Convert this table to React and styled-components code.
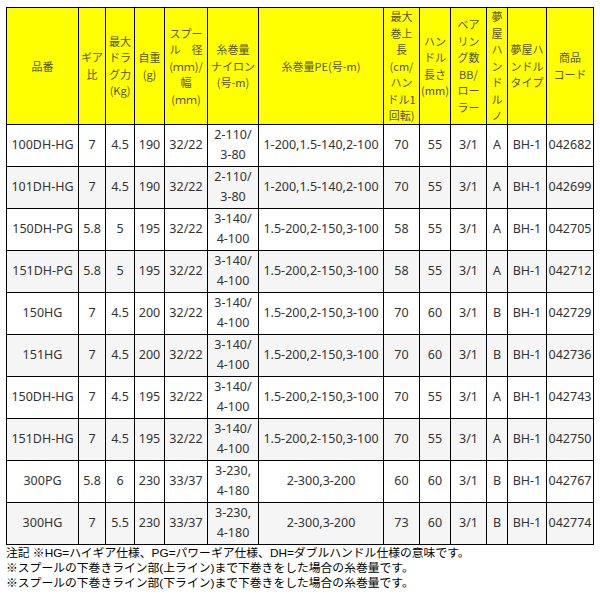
import React from "react";
import styled, { createGlobalStyle } from "styled-components";

const GlobalStyle = createGlobalStyle`
  html, body {
    margin: 0;
    padding: 0;
    background: #fff;
  }
  body {
    font-family: "Noto Sans", "Noto Sans CJK JP", sans-serif;
  }
`;

const StyledPage = styled.div`
  padding: 7px 0 0 6px;
`;

const StyledTable = styled.table`
  border-collapse: collapse;
  table-layout: fixed;
  width: 588px;
`;

const StyledCol = styled.col`
  width: ${(p) => p.$w}px;
`;

const StyledHeadRow = styled.tr`
  height: 116px;
  background: #ffff00;
`;

const StyledHeadCell = styled.th`
  border: 1px solid #000;
  padding: 0;
  font-family: "Noto Sans CJK JP", sans-serif;
  font-weight: normal;
  font-size: 11px;
  line-height: 16.5px;
  color: #55552e;
  text-align: center;
  vertical-align: middle;
`;

const StyledRow = styled.tr`
  height: 42px;
  background: ${(p) => (p.$alt ? "#f5f5f5" : "#fff")};
`;

const StyledCell = styled.td`
  border: 1px solid #000;
  padding: 0;
  font-family: "Noto Sans", "Noto Sans CJK JP", sans-serif;
  font-size: 12.5px;
  line-height: 20px;
  color: #333;
  text-align: center;
  vertical-align: middle;
  white-space: nowrap;
  overflow: hidden;
`;

const StyledNotes = styled.div`
  margin-top: 1px;
`;

const StyledNoteLine = styled.div`
  font-family: "Liberation Sans", "Noto Sans CJK JP", sans-serif;
  font-size: 11.8px;
  line-height: 15px;
  height: 15px;
  color: #000;
  white-space: nowrap;
`;

const colWidths = [72, 27, 29, 30, 43, 51, 125, 36, 31, 36, 21, 39, 47];

const headers = [
  ["品番"],
  ["ギア", "比"],
  ["最大", "ドラ", "グ力", "(Kg)"],
  ["自重", "(g)"],
  ["スプー", "ル　径", "(ｍｍ)/", "幅", "(ｍｍ)"],
  ["糸巻量", "ナイロン", "(号-m)"],
  ["糸巻量PE(号-m)"],
  ["最大", "巻上", "長", "(cm/", "ハン", "ドル1", "回転)"],
  ["ハン", "ドル", "長さ", "(mm)"],
  ["ベア", "リン", "グ数", "BB/", "ロー", "ラー"],
  ["夢", "屋", "ハ", "ン", "ド", "ル", "ノ"],
  ["夢屋ハ", "ンドル", "タイプ"],
  ["商品", "コード"],
];

const reels = [
  ["100DH-HG", "7", "4.5", "190", "32/22", "2-110/|3-80", "1-200,1.5-140,2-100", "70", "55", "3/1", "A", "BH-1", "042682"],
  ["101DH-HG", "7", "4.5", "190", "32/22", "2-110/|3-80", "1-200,1.5-140,2-100", "70", "55", "3/1", "A", "BH-1", "042699"],
  ["150DH-PG", "5.8", "5", "195", "32/22", "3-140/|4-100", "1.5-200,2-150,3-100", "58", "55", "3/1", "A", "BH-1", "042705"],
  ["151DH-PG", "5.8", "5", "195", "32/22", "3-140/|4-100", "1.5-200,2-150,3-100", "58", "55", "3/1", "A", "BH-1", "042712"],
  ["150HG", "7", "4.5", "200", "32/22", "3-140/|4-100", "1.5-200,2-150,3-100", "70", "60", "3/1", "B", "BH-1", "042729"],
  ["151HG", "7", "4.5", "200", "32/22", "3-140/|4-100", "1.5-200,2-150,3-100", "70", "60", "3/1", "B", "BH-1", "042736"],
  ["150DH-HG", "7", "4.5", "195", "32/22", "3-140/|4-100", "1.5-200,2-150,3-100", "70", "55", "3/1", "A", "BH-1", "042743"],
  ["151DH-HG", "7", "4.5", "195", "32/22", "3-140/|4-100", "1.5-200,2-150,3-100", "70", "55", "3/1", "A", "BH-1", "042750"],
  ["300PG", "5.8", "6", "230", "33/37", "3-230,|4-180", "2-300,3-200", "60", "60", "3/1", "B", "BH-1", "042767"],
  ["300HG", "7", "5.5", "230", "33/37", "3-230,|4-180", "2-300,3-200", "73", "60", "3/1", "B", "BH-1", "042774"],
];

const notes = [
  "注記 ※HG=ハイギア仕様、PG=パワーギア仕様、DH=ダブルハンドル仕様の意味です。",
  "※スプールの下巻きライン部(上ライン)まで下巻きをした場合の糸巻量です。",
  "※スプールの下巻きライン部(下ライン)まで下巻きをした場合の糸巻量です。",
];

const Lines = ({ parts }) =>
  parts.map((p, i) => (
    <React.Fragment key={i}>
      {i > 0 && <br />}
      {p}
    </React.Fragment>
  ));

const App = () => {
  return (
    <>
      <GlobalStyle />
      <StyledPage>
        <StyledTable>
          <colgroup>
            {colWidths.map((w, i) => (
              <StyledCol key={i} $w={w} />
            ))}
          </colgroup>
          <thead>
            <StyledHeadRow>
              {headers.map((h, i) => (
                <StyledHeadCell key={i}>
                  <Lines parts={h} />
                </StyledHeadCell>
              ))}
            </StyledHeadRow>
          </thead>
          <tbody>
            {reels.map((r, ri) => (
              <StyledRow key={ri} $alt={ri % 2 === 1}>
                {r.map((v, ci) => (
                  <StyledCell key={ci}>
                    <Lines parts={v.split("|")} />
                  </StyledCell>
                ))}
              </StyledRow>
            ))}
          </tbody>
        </StyledTable>
        <StyledNotes>
          {notes.map((n, i) => (
            <StyledNoteLine key={i}>{n}</StyledNoteLine>
          ))}
        </StyledNotes>
      </StyledPage>
    </>
  );
};

export default App;
